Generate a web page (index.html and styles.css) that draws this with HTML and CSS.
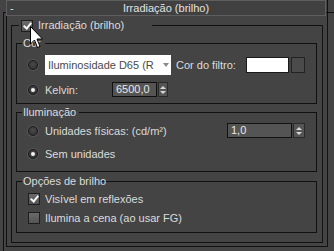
FILE: index.html
```html
<!DOCTYPE html>
<html lang="pt">
  <head>
    <meta charset="UTF-8" />
    <title>Irradiação (brilho)</title>
    <link rel="stylesheet" href="styles.css">
  </head>
  <body>
    <div class="frame-outer">
      <div class="rollout">
        <div class="rollout-title">
          <span class="collapse">-</span>
          <span>Irradiação (brilho)</span>
          <span></span>
        </div>

        <fieldset class="group group-main">
          <legend class="group-title title-main">
            <span class="checkbox checked"></span>Irradiação (brilho)
          </legend>

          <fieldset class="group group-cor">
            <legend class="group-title title-cor">Cor</legend>
            <div class="row row-dropdown">
              <span class="radio"></span>
              <div class="dropdown">
                <span class="dropdown-text">Iluminosidade D65 (R</span>
                <span class="dropdown-arrow"></span>
              </div>
              <span class="label-filter">Cor do filtro:</span>
              <span class="swatch"></span>
              <span class="swatch-btn"></span>
            </div>
            <div class="row row-kelvin">
              <span class="radio selected"></span>
              <span class="label-kelvin">Kelvin:</span>
              <div class="spinner spinner-kelvin">
                <span class="spinner-field">6500,0</span>
                <span class="spinner-btn"><i class="up"></i><i class="down"></i></span>
              </div>
            </div>
          </fieldset>

          <fieldset class="group group-ilum">
            <legend class="group-title title-ilum">Iluminação</legend>
            <div class="row row-fisicas">
              <span class="radio"></span>
              <span class="label">Unidades físicas: (cd/m²)</span>
              <div class="spinner spinner-fisicas">
                <span class="spinner-field">1,0</span>
                <span class="spinner-btn"><i class="up"></i><i class="down"></i></span>
              </div>
            </div>
            <div class="row row-sem">
              <span class="radio selected"></span>
              <span class="label">Sem unidades</span>
            </div>
          </fieldset>

          <fieldset class="group group-opcoes">
            <legend class="group-title title-opcoes">Opções de brilho</legend>
            <div class="row row-check">
              <span class="checkbox checked"></span>
              <span class="label">Visível em reflexões</span>
            </div>
            <div class="row row-check row-check2">
              <span class="checkbox"></span>
              <span class="label">Ilumina a cena (ao usar FG)</span>
            </div>
          </fieldset>
        </fieldset>
      </div>
    </div>

    <svg class="cursor" width="14" height="24" viewBox="0 0 14 24">
      <path d="M0.5 0.5 L0.5 18 L4.5 14 L7.5 21.5 L10 20.5 L7 13 L12.5 13 Z" fill="#fff" stroke="#000" stroke-width="1" />
    </svg>
  </body>
</html>
```

FILE: styles.css
```css
body {
  margin: 0;
  width: 334px;
  height: 251px;
  overflow: hidden;
  background-color: #444;
  font-family: "Liberation Sans", Arial, sans-serif;
  font-size: 11px;
  color: #dcdcdc;
  position: relative;
}

.frame-outer {
  margin: 12px 0 0 3px;
  width: 329px;
  height: 237px;
  border: 1px solid #111;
  padding: 0 0 2px 2px;
  box-sizing: content-box;
}

.rollout {
  margin-top: -13px;
  width: 322px;
  height: 247px;
  border: 1px solid #111;
  border-top: none;
  box-sizing: border-box;
  padding-bottom: 4px;
}

.rollout-title {
  margin: 0 1px 0 -1px;
  height: 16px;
  box-sizing: border-box;
  border: 1px solid #5e5e5e;
  background-color: #404040;
  display: grid;
  grid-template-columns: 20px 1fr 20px;
  line-height: 14px;
  text-align: center;
  color: #e2e2e2;
}

.rollout-title .collapse {
  text-align: left;
  padding-left: 3px;
}

/* group boxes */
fieldset.group {
  margin: 0;
  padding: 0;
  min-width: 0;
  border: 1px solid #111;
}

.group-title {
  padding: 0 0 0 1px;
  height: 13px;
  line-height: 13px;
  box-sizing: border-box;
  white-space: nowrap;
}

.group-main {
  margin: 3px 4px 0 4px !important;
  padding-bottom: 9px !important;
}

.title-main {
  margin-left: 7px;
  width: 133px;
  padding-left: 2px;
  display: flex;
  align-items: center;
}

.title-main .checkbox {
  margin-right: 5px;
}

.group-cor,
.group-ilum,
.group-opcoes {
  margin-left: 4px !important;
  margin-right: 5px !important;
}

.group-cor {
  margin-top: 5px !important;
  padding-bottom: 6px !important;
}

.title-cor {
  margin-left: 5px;
  width: 23px;
}

.group-ilum {
  margin-top: 2px !important;
  padding-bottom: 10px !important;
}

.title-ilum {
  margin-left: 5px;
  width: 57px;
}

.group-opcoes {
  margin-top: 3px !important;
  padding-bottom: 8px !important;
}

.title-opcoes {
  margin-left: 5px;
  width: 78px;
}

/* rows */
.row {
  display: flex;
  align-items: center;
  padding-left: 11px;
  height: 15px;
}

.row .label {
  margin-left: 7px;
}

.row-dropdown {
  margin-top: 5px;
  height: 20px;
}

.row-kelvin {
  margin-top: 7px;
}

.row-fisicas {
  margin-top: 4px;
  padding-right: 11px;
}

.row-sem {
  margin-top: 8px;
}

.row-check {
  margin-top: 5px;
  height: 12px;
}

.row-check2 {
  margin-top: 7px;
}

.row-check .label {
  margin-left: 5px;
}

/* controls */
.radio {
  width: 10px;
  height: 10px;
  box-sizing: border-box;
  border-radius: 50%;
  border: 1px solid #1c1c1c;
  background: radial-gradient(circle at 50% 40%, #4a4a4a, #2e2e2e);
  box-shadow: 0 0 0 1px #555;
  flex: none;
  position: relative;
}

.radio.selected::after {
  content: "";
  position: absolute;
  left: 2px;
  top: 2px;
  width: 4px;
  height: 4px;
  border-radius: 50%;
  background-color: #f2f2f2;
}

.checkbox {
  width: 12px;
  height: 12px;
  box-sizing: border-box;
  border: 1px solid #1e1e1e;
  background: linear-gradient(#6a6a6a, #545454);
  flex: none;
  position: relative;
}

.checkbox.checked::after {
  content: "";
  position: absolute;
  left: 3px;
  top: 0px;
  width: 3px;
  height: 6px;
  border: solid #f4f4f4;
  border-width: 0 2px 2px 0;
  transform: rotate(40deg);
}

.dropdown {
  margin-left: 7px;
  width: 126px;
  height: 20px;
  background-color: #fff;
  display: flex;
  align-items: center;
  color: #4a4a4a;
}

.dropdown-text {
  padding-left: 3px;
  white-space: nowrap;
  width: 112px;
}

.dropdown-arrow {
  margin-left: 3px;
  width: 0;
  height: 0;
  border-left: 3px solid transparent;
  border-right: 3px solid transparent;
  border-top: 4px solid #8a8a8a;
}

.label-filter {
  margin-left: 5px;
}

.swatch {
  margin-left: 10px;
  width: 43px;
  height: 16px;
  box-sizing: border-box;
  border: 1px solid #1a1a1a;
  background-color: #fff;
}

.swatch-btn {
  margin-left: 2px;
  width: 14px;
  height: 16px;
  box-sizing: border-box;
  border: 1px solid #232323;
  background-color: #4b4b4b;
}

.label-kelvin {
  margin-left: 7px;
  width: 67px;
}

.spinner {
  display: flex;
  height: 15px;
}

.spinner-fisicas {
  margin-left: auto;
}

.spinner-field {
  box-sizing: border-box;
  height: 15px;
  border: 1px solid #111;
  background-color: #545454;
  line-height: 13px;
  padding-left: 3px;
  color: #e8e8e8;
}

.spinner-kelvin .spinner-field {
  width: 45px;
}

.spinner-fisicas .spinner-field {
  width: 65px;
}

.spinner-btn {
  margin-left: 1px;
  width: 10px;
  height: 15px;
  box-sizing: border-box;
  border: 1px solid #2a2a2a;
  background-color: #555;
  display: flex;
  flex-direction: column;
  align-items: center;
  justify-content: center;
  gap: 2px;
}

.spinner-fisicas .spinner-btn {
  width: 12px;
}

.spinner-btn .up {
  width: 0;
  height: 0;
  border-left: 3px solid transparent;
  border-right: 3px solid transparent;
  border-bottom: 3px solid #d8d8d8;
}

.spinner-btn .down {
  width: 0;
  height: 0;
  border-left: 3px solid transparent;
  border-right: 3px solid transparent;
  border-top: 3px solid #d8d8d8;
}

.cursor {
  position: absolute;
  left: 30px;
  top: 26px;
}
```
